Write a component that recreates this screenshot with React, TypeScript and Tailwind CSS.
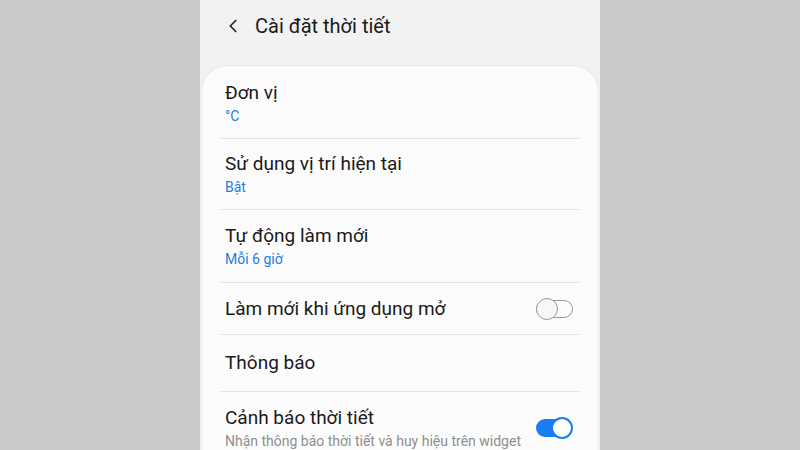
import { ChevronLeft } from 'lucide-react';

interface RowProps {
  title: string;
  subtitle?: string;
  subtitleTone?: 'blue' | 'gray';
  toggle?: 'on' | 'off';
  height: string;
  divider?: boolean;
}

function Toggle({ on }: { on: boolean }) {
  return on ? (
    <div className="relative w-[37px] h-[22px] shrink-0">
      <div className="absolute left-0 right-[2px] top-[2px] bottom-[2px] rounded-full bg-[#1a7ef2]" />
      <div className="absolute right-0 top-0 w-[22px] h-[22px] rounded-full bg-white border-[2px] border-[#1a7ef2]" />
    </div>
  ) : (
    <div className="relative w-[37px] h-[22px] shrink-0">
      <div className="absolute left-0 right-0 top-[2px] bottom-[2px] rounded-full border-[1.5px] border-[#9a9a9a]" />
      <div className="absolute left-0 top-0 w-[22px] h-[22px] rounded-full bg-[#f7f7f7] border-[1.5px] border-[#9a9a9a]" />
    </div>
  );
}

function SettingRow({ title, subtitle, subtitleTone = 'blue', toggle, height, divider = true }: RowProps) {
  return (
    <div className={`flex flex-col ${height}`}>
      <div className="flex flex-1 items-center pl-[23px] pr-[25px]">
        <div className="flex flex-1 flex-col">
          <span className="text-[19px] leading-[24px] text-[#1a1a1a]">{title}</span>
          {subtitle && (
            <span
              className={`text-[14px] leading-[18px] mt-[2px] ${
                subtitleTone === 'blue' ? 'text-[#1b7ddc]' : 'text-[#8e8e8e]'
              }`}
            >
              {subtitle}
            </span>
          )}
        </div>
        {toggle && <Toggle on={toggle === 'on'} />}
      </div>
      {divider && <div className="mx-[19px] h-px bg-[#e3e3e3]" />}
    </div>
  );
}

export default function App() {
  return (
    <div
      className="w-[800px] h-[450px] overflow-hidden bg-[#c9c9c9] flex justify-center"
      style={{ fontFamily: 'Roboto, "Noto Sans", sans-serif' }}
    >
      <div className="w-[400px] h-full bg-[#f2f2f2] flex flex-col">
        {/* Header */}
        <div className="h-[65px] shrink-0 flex items-start pt-[12px] pl-[22px]">
          <ChevronLeft size={22} strokeWidth={1.8} className="text-[#1e1e1e] mt-[3px]" />
          <span className="ml-[11px] text-[20px] leading-[28px] text-[#1a1a1a]">Cài đặt thời tiết</span>
        </div>

        {/* Card */}
        <div className="flex-1 mx-[1px] rounded-t-[26px] bg-[#fcfcfc] border border-b-0 border-[#e8e8e8] pt-[1px]">
          <SettingRow title="Đơn vị" subtitle="°C" height="h-[72px]" />
          <SettingRow title="Sử dụng vị trí hiện tại" subtitle="Bật" height="h-[71px]" />
          <SettingRow title="Tự động làm mới" subtitle="Mỗi 6 giờ" height="h-[73px]" />
          <SettingRow title="Làm mới khi ứng dụng mở" toggle="off" height="h-[52px]" />
          <SettingRow title="Thông báo" height="h-[57px]" />
          <SettingRow
            title="Cảnh báo thời tiết"
            subtitle="Nhận thông báo thời tiết và huy hiệu trên widget"
            subtitleTone="gray"
            toggle="on"
            height="h-[72px]"
            divider={false}
          />
        </div>
      </div>
    </div>
  );
}
